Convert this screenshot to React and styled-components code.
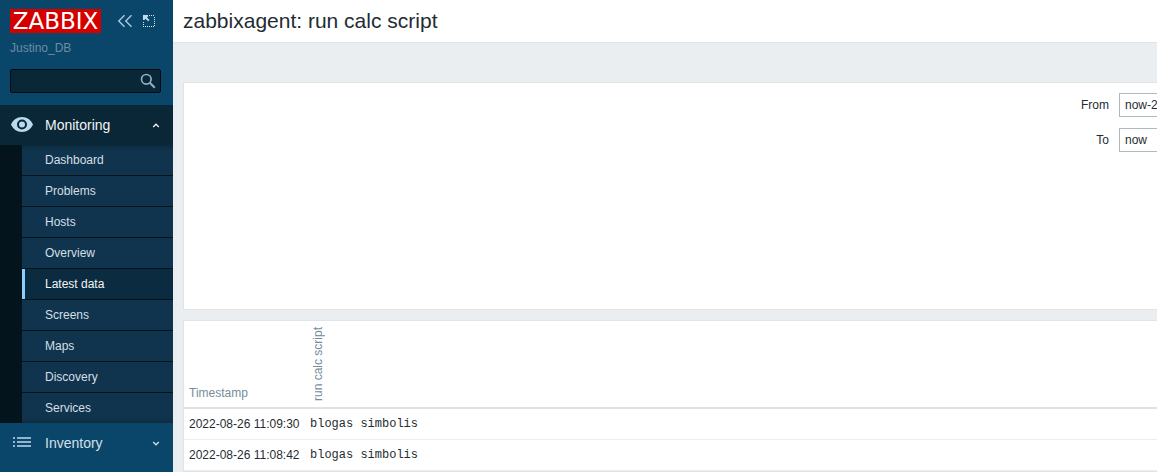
import React from "react";
import styled, { createGlobalStyle } from "styled-components";

const GlobalStyle = createGlobalStyle`
  *, *::before, *::after { box-sizing: border-box; }
  body {
    margin: 0;
    background: #ebeef0;
    color: #1f2c33;
    font: 12px/14px "Liberation Sans", Arial, sans-serif;
    overflow: hidden;
  }
  ul { margin: 0; padding: 0; list-style: none; }
  a { color: inherit; text-decoration: none; }
`;

const Page = styled.div`
  display: flex;
  height: 100vh;
  overflow: hidden;
`;

const Sidebar = styled.aside`
  flex: 0 0 173px;
  min-width: 0;
  background: #0a466a;
`;

const Brand = styled.div`
  display: flex;
  align-items: center;
  padding: 9px 10px 0;
`;

const Logo = styled.a`
  display: flex;
  justify-content: center;
  flex: 0 0 91px;
  height: 24px;
  margin-right: 15px;
  overflow: hidden;
  background: #d40000;
  && { color: #fff; }
  font: 23px/24px "DejaVu Sans", sans-serif;
`;

const IconButton = styled.button`
  display: flex;
  flex: 0 0 18px;
  align-items: center;
  justify-content: center;
  height: 24px;
  margin-right: 6px;
  padding: 0;
  border: 0;
  background: none;
  color: #a5c6db;
`;

const ServerName = styled.div`
  padding: 8px 10px 0;
  color: #6a8da3;
`;

const Search = styled.form`
  display: flex;
  height: 24px;
  margin: 14px 12px 12px 10px;
  border: 1px solid #030d13;
  border-radius: 2px;
  background: #0a2737;
`;

const SearchInput = styled.input`
  flex: 1;
  width: 100%;
  min-width: 0;
  padding: 0 6px;
  border: 0;
  outline: 0;
  background: none;
  color: #fff;
  font: inherit;
`;

const SearchButton = styled.button`
  display: flex;
  flex: 0 0 24px;
  align-items: center;
  justify-content: center;
  padding: 0;
  border: 0;
  background: none;
  color: #8fb0c4;
`;

const Section = styled.a`
  display: flex;
  align-items: center;
  height: 40px;
  padding: 0 13px 0 10px;
  background: ${(p) => (p.$open ? "#0a2737" : "transparent")};
  && { color: ${(p) => (p.$open ? "#f2f4f5" : "#d5e0e7")}; }
  font-size: 14px;
  line-height: 16px;
`;

const SectionIcon = styled.span`
  display: flex;
  flex: 0 0 24px;
  margin-right: 11px;
  color: ${(p) => (p.$open ? "#b9d9ee" : "#8fb5cf")};
`;

const SectionLabel = styled.span`
  flex: 1;
`;

const Submenu = styled.ul`
  border-left: 22px solid #04141d;
  background: linear-gradient(#0b2b3d, #10344d 6px, #10344d calc(100% - 6px), #0d2d42);
`;

const SubmenuItem = styled.li`
  border-bottom: 1px solid #04141d;
  &:last-child { border-bottom: 0; }
`;

const SubmenuLink = styled.a`
  display: block;
  padding: 8px 20px;
  border-left: 3px solid ${(p) => (p.$active ? "#8ad0ff" : "transparent")};
  background: ${(p) => (p.$active ? "#0b2b40" : "transparent")};
  && { color: ${(p) => (p.$active ? "#f2f4f5" : "#d5dfe5")}; }
`;

const Main = styled.main`
  flex: 1;
  min-width: 0;
  overflow: hidden;
`;

const Header = styled.header`
  padding: 9px 10px;
  border-bottom: 1px solid #dfe4e7;
  background: #fff;
`;

const Title = styled.h1`
  margin: 0;
  font-size: 21px;
  font-weight: 400;
  line-height: 24px;
`;

/* The report is wider than the visible area and runs past its right edge. */
const Content = styled.div`
  width: calc(100% + 200px);
  padding: 39px 10px 0;
`;

const Panel = styled.section`
  margin-bottom: 10px;
  border: 1px solid #dfe4e7;
  background: #fff;
`;

const FilterPanel = styled(Panel)`
  display: flex;
  justify-content: flex-end;
  min-height: 228px;
`;

const TimeForm = styled.form`
  display: flex;
  flex-direction: column;
  gap: 11px;
  padding: 10px;
`;

const Field = styled.label`
  display: flex;
  align-items: center;
  justify-content: flex-end;
  gap: 10px;
`;

const TimeInput = styled.input`
  width: 217px;
  height: 24px;
  padding: 0 5px;
  border: 1px solid #acbbc2;
  border-radius: 0;
  background: #fff;
  color: inherit;
  font: inherit;
`;

const DataTable = styled.table`
  width: 100%;
  border-collapse: separate;
  border-spacing: 0;
`;

const HeadCell = styled.th`
  width: ${(p) => (p.$narrow ? "121px" : "auto")};
  padding: 6px 5px;
  border-bottom: 2px solid #dce2e5;
  color: #768d99;
  font-weight: 400;
  line-height: 16px;
  text-align: left;
  vertical-align: bottom;
`;

const VerticalLabel = styled.span`
  display: block;
  width: 16px;
  white-space: nowrap;
  writing-mode: vertical-rl;
  transform: rotate(180deg);
`;

const Cell = styled.td`
  padding: 8px 5px;
  border-bottom: 1px solid #ebeef0;
  white-space: nowrap;
`;

const Output = styled.pre`
  margin: 0;
  font: 12px/14px "Liberation Mono", "Courier New", monospace;
`;

const MENU = [
  "Dashboard", "Problems", "Hosts", "Overview", "Latest data",
  "Screens", "Maps", "Discovery", "Services",
];

const ROWS = [
  ["2022-08-26 11:09:30", "blogas simbolis"],
  ["2022-08-26 11:08:42", "blogas simbolis"],
];

const CollapseIcon = () => (
  <svg width="16" height="14" viewBox="0 0 16 14" fill="none" stroke="currentColor" strokeWidth="1.5">
    <path d="M7.500 1.300 1.800 7l5.700 5.700M14.500 1.300 8.800 7l5.700 5.700" />
  </svg>
);

const KioskIcon = () => (
  <svg width="14" height="14" viewBox="0 0 14 14" fill="none" stroke="#d3e6f1">
    <path d="M7 1.500h6M12.500 3v10M1 12.500h12M1.500 8v5" strokeDasharray="1 1" />
    <path d="M1 1h5v1.500L5 3.500l2.500 2.500L6.200 7.200 3.500 4.800 2.500 6H1z" fill="#c3dae8" stroke="none" />
  </svg>
);

const SearchIcon = () => (
  <svg width="16" height="16" viewBox="0 0 16 16" fill="none" stroke="currentColor">
    <circle cx="6.3" cy="6.3" r="4.8" strokeWidth="1.7" />
    <path d="m9.800 9.800 5 5" strokeWidth="2" />
  </svg>
);

const EyeIcon = () => (
  <svg width="24" height="18" viewBox="0 0 24 18" fill="currentColor" fillRule="evenodd">
    <path d="M12 1C7 1 2.800 4 1 8.500 2.800 13 7 16 12 16s9.200-3 11-7.500C21.200 4 17 1 12 1Zm0 12.500a5 5 0 1 1 0-10 5 5 0 0 1 0 10Zm0-2a3 3 0 1 0 0-6 3 3 0 0 0 0 6Z" />
  </svg>
);

const ListIcon = () => (
  <svg width="24" height="16" viewBox="0 0 24 16" fill="currentColor" shapeRendering="crispEdges">
    <path d="M3 2h2v2H3zM7 2h14v2H7zM3 6h2v2H3zM7 6h14v2H7zM3 10h2v2H3zM7 10h14v2H7z" />
  </svg>
);

const Chevron = ({ up }) => (
  <svg width="8" height="6" viewBox="0 0 8 6" fill="none" stroke="currentColor" strokeWidth="1.3">
    <path d={up ? "M1.200 5 4 2.200 6.800 5" : "M1.200 2 4 4.800 6.800 2"} />
  </svg>
);

export default function App() {
  return (
    <>
      <GlobalStyle />
      <Page>
        <Sidebar>
          <Brand>
            <Logo href="#">ZABBIX</Logo>
            <IconButton type="button" aria-label="Collapse sidebar"><CollapseIcon /></IconButton>
            <IconButton type="button" aria-label="Kiosk mode"><KioskIcon /></IconButton>
          </Brand>
          <ServerName>Justino_DB</ServerName>
          <Search role="search">
            <SearchInput type="text" aria-label="Search" />
            <SearchButton type="button" aria-label="Search"><SearchIcon /></SearchButton>
          </Search>
          <nav>
            <Section href="#" $open>
              <SectionIcon $open><EyeIcon /></SectionIcon>
              <SectionLabel>Monitoring</SectionLabel>
              <Chevron up />
            </Section>
            <Submenu>
              {MENU.map((name) => (
                <SubmenuItem key={name}>
                  <SubmenuLink href="#" $active={name === "Latest data"}>{name}</SubmenuLink>
                </SubmenuItem>
              ))}
            </Submenu>
            <Section href="#">
              <SectionIcon><ListIcon /></SectionIcon>
              <SectionLabel>Inventory</SectionLabel>
              <Chevron />
            </Section>
          </nav>
        </Sidebar>
        <Main>
          <Header><Title>zabbixagent: run calc script</Title></Header>
          <Content>
            <FilterPanel>
              <TimeForm>
                <Field>From<TimeInput type="text" defaultValue="now-2d" /></Field>
                <Field>To<TimeInput type="text" defaultValue="now" /></Field>
              </TimeForm>
            </FilterPanel>
            <Panel>
              <DataTable>
                <thead>
                  <tr>
                    <HeadCell $narrow>Timestamp</HeadCell>
                    <HeadCell><VerticalLabel>run calc script</VerticalLabel></HeadCell>
                  </tr>
                </thead>
                <tbody>
                  {ROWS.map(([time, value]) => (
                    <tr key={time}>
                      <Cell>{time}</Cell>
                      <Cell><Output>{value}</Output></Cell>
                    </tr>
                  ))}
                </tbody>
              </DataTable>
            </Panel>
          </Content>
        </Main>
      </Page>
    </>
  );
}
